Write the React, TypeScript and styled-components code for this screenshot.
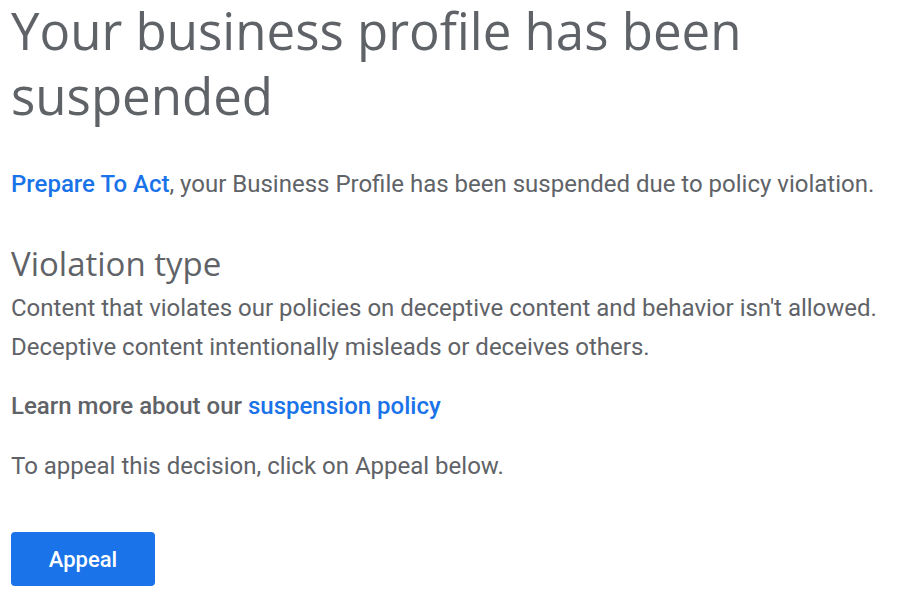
import React from "react";
import styled, { createGlobalStyle } from "styled-components";

const Global = createGlobalStyle`
  html, body { margin: 0; padding: 0; background: #fff; }
  body { font-family: Roboto, "Liberation Sans", sans-serif; color: #5f6368; }
`;

const Page = styled.main`
  display: flex;
  flex-direction: column;
  padding: 0 11px;
`;

const Title = styled.h1`
  margin: -2px 0 0 0;
  font-family: "Open Sans", Roboto, sans-serif;
  font-weight: 400;
  font-size: 51px;
  line-height: 65px;
  color: #5f6368;
`;

const Para = styled.p<{ $top: number; $bold?: boolean }>`
  margin: ${(p) => p.$top}px 0 0 0;
  font-size: 24px;
  line-height: 39px;
  font-weight: ${(p) => (p.$bold ? 500 : 400)};
  color: #5f6368;
`;

const Link = styled.a`
  color: #1a73e8;
  font-weight: 500;
  text-decoration: none;
`;

const SubTitle = styled.h2`
  margin: 40px 0 0 0;
  font-family: "Open Sans", Roboto, sans-serif;
  font-weight: 400;
  font-size: 33px;
  line-height: 40px;
  color: #5f6368;
`;

const Button = styled.button`
  margin-top: 46px;
  width: 144px;
  height: 54px;
  border: none;
  border-radius: 4px;
  background: #1a73e8;
  color: #fff;
  font-family: Roboto, sans-serif;
  font-weight: 500;
  font-size: 22px;
  align-self: flex-start;
  cursor: pointer;
`;

export default function App() {
  return (
    <>
      <Global />
      <Page>
        <Title>Your business profile has been suspended</Title>
        <Para $top={37}>
          <Link href="#">Prepare To Act</Link>, your Business Profile has been suspended due to policy violation.
        </Para>
        <SubTitle>Violation type</SubTitle>
        <Para $top={5}>
          Content that violates our policies on deceptive content and behavior isn't allowed.
          <br />
          Deceptive content intentionally misleads or deceives others.
        </Para>
        <Para $top={20} $bold>
          Learn more about our <Link href="#">suspension policy</Link>
        </Para>
        <Para $top={21}>To appeal this decision, click on Appeal below.</Para>
        <Button>Appeal</Button>
      </Page>
    </>
  );
}
